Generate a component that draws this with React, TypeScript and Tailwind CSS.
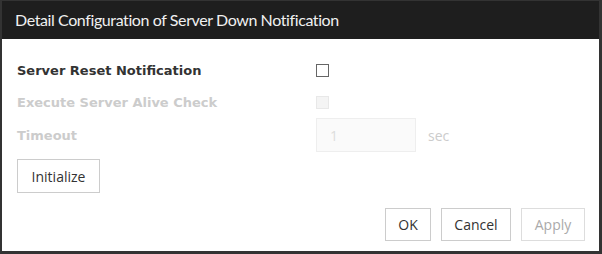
import React from "react";

const Row: React.FC<{ label: string; disabled?: boolean; h: string; children: React.ReactNode }> = ({ label, disabled, h, children }) => (
  <div className={`flex items-center ${h}`}>
    <div
      className={`w-[299px] pt-[2px] text-[13px] font-bold ${disabled ? "text-[#cccccc]" : "text-[#333333]"}`}
      style={{ fontFamily: '"DejaVu Sans", sans-serif' }}
    >
      {label}
    </div>
    <div className="flex items-center">{children}</div>
  </div>
);

const Btn: React.FC<{ label: string; w: string; disabled?: boolean }> = ({ label, w, disabled }) => (
  <button
    className={`h-[33px] ${w} border bg-white text-[14px] ${disabled ? "border-[#dddddd] text-[#aaaaaa]" : "border-[#cccccc] text-[#333333]"}`}
  >
    {label}
  </button>
);

export default function App() {
  return (
    <div className="w-[602px] h-[254px] bg-[#333333] pt-[1px] pl-[2px] overflow-hidden" style={{ fontFamily: '"Open Sans", "Noto Sans", sans-serif' }}>
      <div className="w-[597px] h-[250px] bg-white flex flex-col">
        <div
          className="h-[38px] bg-[#1e1e1e] text-[#f0f0f0] text-[16px] tracking-[-0.4px] pl-[13px] flex items-center"
          style={{ fontFamily: 'Lato, sans-serif' }}
        >
          Detail Configuration of Server Down Notification
        </div>
        <div className="pt-[15px] pl-[15px] pr-[14px] flex flex-col">
          <Row label="Server Reset Notification" h="h-[32px]">
            <span className="block w-[13px] h-[13px] border border-[#666666] bg-white" />
          </Row>
          <Row label="Execute Server Alive Check" disabled h="h-[32px]">
            <span className="block w-[13px] h-[13px] border border-[#e8e8e8] bg-[#f4f4f4]" />
          </Row>
          <Row label="Timeout" disabled h="h-[34px]">
            <div className="w-[100px] h-[34px] border border-[#eeeeee] bg-[#fafafa] text-[14px] text-[#dddddd] pl-[13px] flex items-center">1</div>
            <span className="ml-[12px] text-[14px] text-[#cccccc]">sec</span>
          </Row>
          <div className="mt-[7px]">
            <button className="h-[34px] w-[83px] border border-[#cccccc] bg-white text-[14px] text-[#333333]">Initialize</button>
          </div>
          <div className="mt-[15px] flex justify-end gap-[10px]">
            <Btn label="OK" w="w-[46px]" />
            <Btn label="Cancel" w="w-[70px]" />
            <Btn label="Apply" w="w-[64px]" disabled />
          </div>
        </div>
      </div>
    </div>
  );
}
